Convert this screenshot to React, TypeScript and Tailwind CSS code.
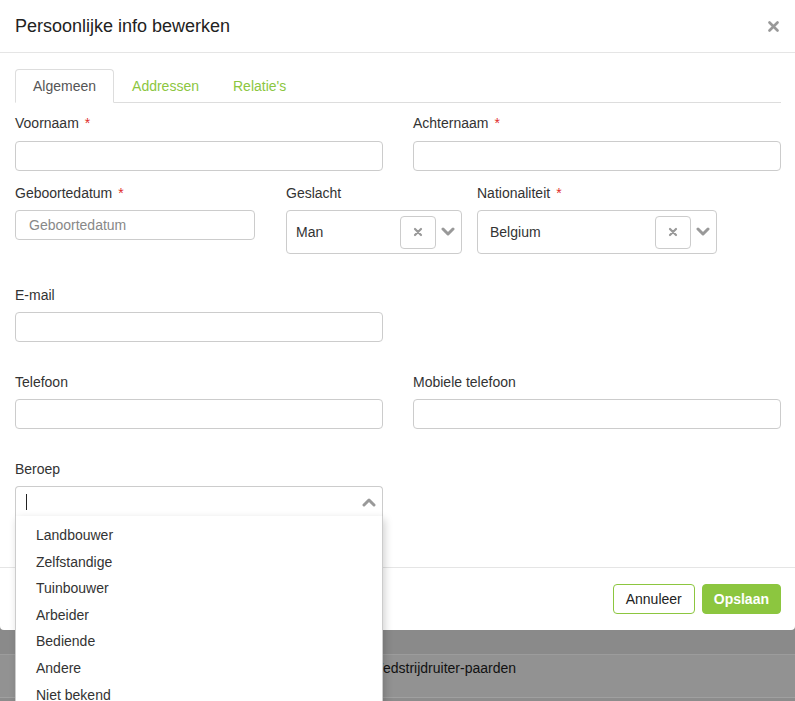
import { useState } from "react";

const font = { fontFamily: '"Liberation Sans", Arial, sans-serif' };

function Label({ text, required }: { text: string; required?: boolean }) {
  return (
    <div className="h-[20px] leading-[20px] text-[14px] text-[#333]">
      {text}
      {required && <span className="ml-[6px] text-[#e02b2b]">*</span>}
    </div>
  );
}

function TextInput({ placeholder, className = "" }: { placeholder?: string; className?: string }) {
  return (
    <input
      placeholder={placeholder}
      className={`block h-[30px] w-full rounded-[4px] border border-[#ccc] bg-white px-[13px] text-[14px] text-[#333] outline-none placeholder:text-[#888] ${className}`}
    />
  );
}

function Chevron({ up }: { up?: boolean }) {
  return (
    <svg width="14" height="10" viewBox="0 0 14 10" className="shrink-0">
      <path
        d={up ? "M2 8 L7 3 L12 8" : "M2 2 L7 7 L12 2"}
        fill="none"
        stroke="#999"
        strokeWidth="3"
        strokeLinecap="round"
        strokeLinejoin="round"
      />
    </svg>
  );
}

function ClearX() {
  return (
    <svg width="10" height="10" viewBox="0 0 10 10">
      <path d="M2 2 L8 8 M8 2 L2 8" stroke="#999" strokeWidth="2.2" strokeLinecap="round" />
    </svg>
  );
}

function Select({ value, width, pl }: { value: string; width: string; pl: string }) {
  return (
    <div className={`flex h-[44px] ${width} items-center rounded-[4px] border border-[#ccc] bg-white ${pl} pr-[5px]`}>
      <span className="flex-1 text-[14px] text-[#333]">{value}</span>
      <div className="flex h-[33px] w-[36px] items-center justify-center rounded-[4px] border border-[#ccc]">
        <ClearX />
      </div>
      <div className="ml-[4px] flex w-[16px] justify-center">
        <Chevron />
      </div>
    </div>
  );
}

const beroepen = ["Landbouwer", "Zelfstandige", "Tuinbouwer", "Arbeider", "Bediende", "Andere", "Niet bekend"];

export default function App() {
  const [tab] = useState("Algemeen");
  const tabs = ["Algemeen", "Addressen", "Relatie's"];

  return (
    <div className="relative h-[701px] w-[795px] overflow-hidden bg-[#8c8c8c]" style={font}>
      <div className="h-[630px] rounded-b-[4px] bg-white">
        <div className="flex h-[53px] items-center justify-between border-b border-[#e5e5e5] pl-[15px] pr-[16px]">
          <h4 className="text-[18px] text-[#222]">Persoonlijke info bewerken</h4>
          <svg width="11" height="11" viewBox="0 0 11 11">
            <path d="M1.5 1.5 L9.5 9.5 M9.5 1.5 L1.5 9.5" stroke="#999" strokeWidth="2.6" strokeLinecap="round" />
          </svg>
        </div>

        <div className="h-[514px] pl-[15px] pr-[14px] pt-[16px]">
          <div className="flex border-b border-[#ddd]">
            {tabs.map((t) => (
              <div
                key={t}
                className={`-mb-px mr-[2px] h-[34px] text-[14px] leading-[32px] ${
                  t === tab
                    ? "rounded-t-[4px] border border-[#ddd] border-b-white bg-white px-[17px] text-[#555]"
                    : "border border-transparent px-[15px] text-[#8cc63f]"
                }`}
              >
                {t}
              </div>
            ))}
          </div>

          <div className="mt-[10px] grid grid-cols-2 gap-x-[30px]">
            <div>
              <Label text="Voornaam" required />
              <div className="mt-[8px]">
                <TextInput />
              </div>
            </div>
            <div>
              <Label text="Achternaam" required />
              <div className="mt-[8px]">
                <TextInput />
              </div>
            </div>
          </div>

          <div className="mt-[12px] flex">
            <div className="w-[240px]">
              <Label text="Geboortedatum" required />
              <div className="mt-[7px]">
                <TextInput placeholder="Geboortedatum" />
              </div>
            </div>
            <div className="ml-[31px]">
              <Label text="Geslacht" />
              <div className="mt-[7px]">
                <Select value="Man" width="w-[176px]" pl="pl-[9px]" />
              </div>
            </div>
            <div className="ml-[15px]">
              <Label text="Nationaliteit" required />
              <div className="mt-[7px]">
                <Select value="Belgium" width="w-[240px]" pl="pl-[12px]" />
              </div>
            </div>
          </div>

          <div className="mt-[31px] grid grid-cols-2 gap-x-[30px]">
            <div>
              <Label text="E-mail" />
              <div className="mt-[7px]">
                <TextInput />
              </div>
            </div>
          </div>

          <div className="mt-[30px] grid grid-cols-2 gap-x-[30px]">
            <div>
              <Label text="Telefoon" />
              <div className="mt-[7px]">
                <TextInput />
              </div>
            </div>
            <div>
              <Label text="Mobiele telefoon" />
              <div className="mt-[7px]">
                <TextInput />
              </div>
            </div>
          </div>

          <div className="mt-[30px] grid grid-cols-2 gap-x-[30px]">
            <div className="relative z-10">
              <Label text="Beroep" />
              <div className="relative mt-[7px]">
                <div className="flex h-[30px] items-center rounded-t-[4px] border border-b-0 border-[#ccc] bg-white pl-[10px] pr-[6px]">
                  <span className="h-[16px] w-px bg-[#222]" />
                  <span className="flex-1" />
                  <Chevron up />
                </div>
                <div className="absolute left-0 right-0 top-[30px] border border-t-0 border-[#ccc] bg-white pt-[6px] shadow-[2px_3px_8px_rgba(0,0,0,0.18)]">
                  {beroepen.map((b) => (
                    <div key={b} className="h-[26.6px] pl-[20px] text-[14px] leading-[26px] text-[#333]">
                      {b}
                    </div>
                  ))}
                </div>
              </div>
            </div>
          </div>
        </div>

        <div className="flex h-[63px] items-center justify-end gap-[7px] border-t border-[#e5e5e5] pr-[14px]">
          <button className="h-[30px] rounded-[4px] border border-[#8cc63f] bg-white px-[12px] text-[14px] text-[#222]">
            Annuleer
          </button>
          <button className="h-[30px] rounded-[4px] border border-[#8cc63f] bg-[#8cc63f] px-[11px] text-[14px] font-bold text-white">
            Opslaan
          </button>
        </div>
      </div>

      <div className="h-[25px] border-b border-[#9c9c9c] bg-[#8a8a8a]" />
      <div className="h-[43px] border-b border-[#a0a0a0] bg-[#929292] pl-[370px] pt-[3px] text-[14px] leading-[20px] text-[#111]">
        Wedstrijdruiter-paarden
      </div>
    </div>
  );
}
